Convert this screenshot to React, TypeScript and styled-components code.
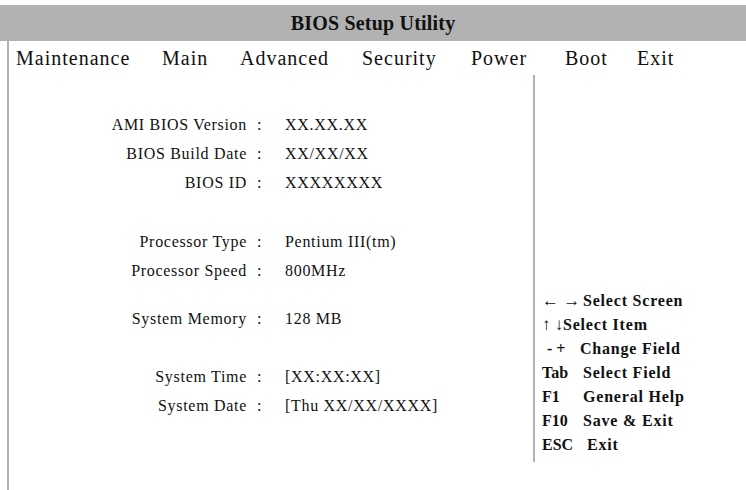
import type { FC } from "react";
import styled, { createGlobalStyle } from "styled-components";

const GRAY = "#b2b2b2";

const GlobalStyle = createGlobalStyle`
  html, body {
    margin: 0;
    padding: 0;
    background: #ffffff;
  }
  body {
    font-family: "Liberation Serif", "Times New Roman", serif;
    color: #111111;
  }
`;

const Screen = styled.div`
  width: 746px;
  height: 490px;
  padding-top: 5px;
  box-sizing: border-box;
  display: flex;
  flex-direction: column;
  overflow: hidden;
`;

const TitleBar = styled.header`
  height: 36px;
  background: ${GRAY};
  display: flex;
  align-items: center;
  justify-content: center;
  font-size: 20px;
  font-weight: bold;
  letter-spacing: 0.2px;
`;

const Body = styled.div`
  flex: 1;
  margin-left: 7px;
  border-left: 2px solid ${GRAY};
  display: flex;
  flex-direction: column;
`;

const MenuBar = styled.nav`
  height: 34px;
  padding-left: 7px;
  display: grid;
  grid-template-columns: 146px 78px 122px 109px 94px 72px auto;
  align-items: center;
  font-size: 20px;
  letter-spacing: 1px;
`;

const MenuItem = styled.span`
  white-space: nowrap;
`;

const Panels = styled.div`
  height: 387px;
  display: grid;
  grid-template-columns: 524px 1fr;
`;

const MainPanel = styled.section`
  padding-top: 35px;
  display: flex;
  flex-direction: column;
`;

const Group = styled.div<{ $gap: number }>`
  margin-top: ${(p) => p.$gap}px;
`;

const InfoRow = styled.div`
  display: grid;
  grid-template-columns: 238px 38px 1fr;
  height: 29px;
  line-height: 29px;
  font-size: 16px;
  letter-spacing: 0.7px;
  white-space: nowrap;
`;

const Label = styled.span`
  text-align: right;
`;

const Colon = styled.span`
  padding-left: 10px;
`;

const Value = styled.span``;

const HelpPanel = styled.aside`
  border-left: 2px solid ${GRAY};
  padding: 0 0 5px 7px;
  display: flex;
  flex-direction: column;
  justify-content: flex-end;
`;

const HelpRow = styled.div`
  display: flex;
  height: 24px;
  line-height: 24px;
  font-size: 16px;
  font-weight: bold;
  letter-spacing: 0.8px;
  white-space: nowrap;
`;

const HelpKey = styled.span<{ $width: number; $indent?: number; $thin?: boolean }>`
  width: ${(p) => p.$width}px;
  padding-left: ${(p) => p.$indent ?? 0}px;
  flex-shrink: 0;
  font-weight: ${(p) => (p.$thin ? "normal" : "bold")};
  font-size: ${(p) => (p.$thin ? "17px" : "16px")};
  letter-spacing: 0;
`;

const menu = ["Maintenance", "Main", "Advanced", "Security", "Power", "Boot", "Exit"];

const groups: { gap: number; rows: [string, string][] }[] = [
  {
    gap: 0,
    rows: [
      ["AMI BIOS Version", "XX.XX.XX"],
      ["BIOS Build Date", "XX/XX/XX"],
      ["BIOS ID", "XXXXXXXX"],
    ],
  },
  {
    gap: 30,
    rows: [
      ["Processor Type", "Pentium III(tm)"],
      ["Processor Speed", "800MHz"],
    ],
  },
  { gap: 19, rows: [["System Memory", "128 MB"]] },
  {
    gap: 29,
    rows: [
      ["System Time", "[XX:XX:XX]"],
      ["System Date", "[Thu XX/XX/XXXX]"],
    ],
  },
];

const help: { key: string; text: string; width: number; indent?: number; thin?: boolean }[] = [
  { key: "← →", text: "Select Screen", width: 41, thin: true },
  { key: "↑ ↓", text: "Select Item", width: 21, thin: true },
  { key: "- +", text: "Change Field", width: 33, indent: 5 },
  { key: "Tab", text: "Select Field", width: 41 },
  { key: "F1", text: "General Help", width: 41 },
  { key: "F10", text: "Save & Exit", width: 41 },
  { key: "ESC", text: "Exit", width: 45 },
];

const App: FC = () => {
  return (
    <Screen>
      <GlobalStyle />
      <TitleBar>BIOS Setup Utility</TitleBar>

      <Body>
        <MenuBar>
          {menu.map((m) => (
            <MenuItem key={m}>{m}</MenuItem>
          ))}
        </MenuBar>

        <Panels>
          <MainPanel>
            {groups.map((g, i) => (
              <Group key={i} $gap={g.gap}>
                {g.rows.map(([label, value]) => (
                  <InfoRow key={label}>
                    <Label>{label}</Label>
                    <Colon>:</Colon>
                    <Value>{value}</Value>
                  </InfoRow>
                ))}
              </Group>
            ))}
          </MainPanel>

          <HelpPanel>
            {help.map((h) => (
              <HelpRow key={h.text}>
                <HelpKey $width={h.width} $indent={h.indent} $thin={h.thin}>
                  {h.key}
                </HelpKey>
                <span>{h.text}</span>
              </HelpRow>
            ))}
          </HelpPanel>
        </Panels>
      </Body>
    </Screen>
  );
};

export default App;
